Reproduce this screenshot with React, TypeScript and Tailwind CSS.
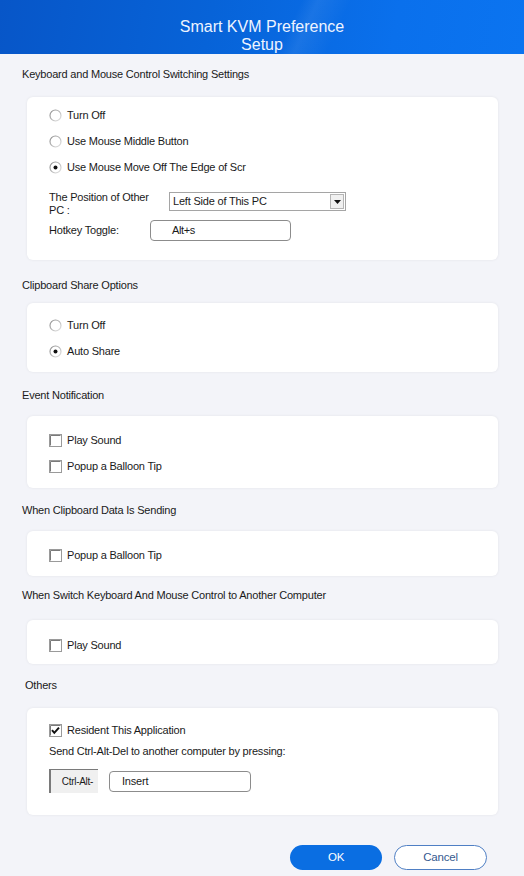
import React from 'react';

const font = { fontFamily: '"Liberation Sans", Arial, sans-serif' };

function Radio({ checked }: { checked?: boolean }) {
  return (
    <svg width="13" height="13" viewBox="0 0 13 13" className="shrink-0">
      <defs>
        <linearGradient id="rg" x1="0" y1="0" x2="1" y2="1">
          <stop offset="0" stopColor="#8a8a8a" />
          <stop offset="1" stopColor="#e6e6e6" />
        </linearGradient>
      </defs>
      <circle cx="6.5" cy="6.5" r="5.5" fill="#fff" stroke="url(#rg)" strokeWidth="1.2" />
      {checked && <circle cx="6.5" cy="6.5" r="2" fill="#111" />}
    </svg>
  );
}

function Check({ checked }: { checked?: boolean }) {
  return (
    <svg width="13" height="13" viewBox="0 0 13 13" className="shrink-0">
      <rect x="0.5" y="0.5" width="12" height="12" fill="#fff" stroke="#9a9a9a" />
      <path d="M1.5 1.5h10M1.5 1.5v10" stroke="#7a7a7a" />
      {checked && <path d="M3 6.2l2.3 2.6L10 3.6" fill="none" stroke="#111" strokeWidth="2" />}
    </svg>
  );
}

function Row({ children }: { children: React.ReactNode }) {
  return <div className="flex h-[26px] items-center gap-[5px]">{children}</div>;
}

function Title({ children, className }: { children: React.ReactNode; className: string }) {
  return <div className={`leading-[16px] ${className}`}>{children}</div>;
}

function Card({ children, className }: { children: React.ReactNode; className: string }) {
  return (
    <div className={`ml-[27px] mr-[26px] rounded-[6px] bg-white px-[22px] shadow-[0_0_3px_rgba(0,0,0,0.07)] ${className}`}>
      {children}
    </div>
  );
}

export default function App() {
  return (
    <div
      className="h-[876px] w-[524px] overflow-hidden bg-[#f3f4f9] text-[11px] tracking-[-0.2px] text-[#1a1a1a]"
      style={font}
    >
      {/* Header */}
      <div className="relative h-[54px] overflow-hidden bg-[linear-gradient(100deg,#0756c8_0%,#0763d8_40%,#0a70ec_75%,#0b74f0_100%)]">
        <div className="absolute inset-0 bg-[linear-gradient(115deg,transparent_0%,transparent_55%,rgba(255,255,255,0.07)_58%,transparent_64%,transparent_100%)]" />
        <div className="relative pt-[18px] text-center text-[16px] leading-[18px] tracking-normal text-[#eef4ff]">
          Smart KVM Preference
          <br />
          Setup
        </div>
      </div>

      <Title className="mb-[15px] pl-[22px] pt-[12px]">Keyboard and Mouse Control Switching Settings</Title>
      <Card className="h-[163px] pt-[5px]">
        <Row>
          <Radio />
          <span>Turn Off</span>
        </Row>
        <Row>
          <Radio />
          <span>Use Mouse Middle Button</span>
        </Row>
        <Row>
          <Radio checked />
          <span>Use Mouse Move Off The Edge of Scr</span>
        </Row>
        <div className="mt-[10px] flex h-[26px]">
          <div className="w-[120px] pt-[1px] leading-[13px]">
            The Position of Other
            <br />
            PC :
          </div>
          <div className="mt-[2px] flex h-[19px] w-[177px] items-center border border-[#a5a5a5] bg-white">
            <span className="flex-1 pl-[3px]">Left Side of This PC</span>
            <div className="mr-[1px] flex h-[15px] w-[14px] items-center justify-center border border-[#b5b5b5] bg-[#f0f0f0]">
              <svg width="7" height="4" viewBox="0 0 7 4">
                <path d="M0 0h7L3.5 4z" fill="#111" />
              </svg>
            </div>
          </div>
        </div>
        <div className="mt-[4px] flex h-[21px] items-center">
          <span className="w-[101px]">Hotkey Toggle:</span>
          <div className="flex h-[21px] w-[141px] items-center rounded-[4px] border border-[#8c8c8c] pl-[21px] tracking-[-0.4px]">
            Alt+s
          </div>
        </div>
      </Card>

      <Title className="mb-[10px] pl-[22px] pt-[17px]">Clipboard Share Options</Title>
      <Card className="h-[69px] pt-[9px]">
        <Row>
          <Radio />
          <span>Turn Off</span>
        </Row>
        <Row>
          <Radio checked />
          <span>Auto Share</span>
        </Row>
      </Card>

      <Title className="mb-[13px] pl-[22px] pt-[15px]">Event Notification</Title>
      <Card className="h-[72px] pt-[11px]">
        <Row>
          <Check />
          <span>Play Sound</span>
        </Row>
        <Row>
          <Check />
          <span>Popup a Balloon Tip</span>
        </Row>
      </Card>

      <Title className="mb-[13px] pl-[22px] pt-[14px]">When Clipboard Data Is Sending</Title>
      <Card className="h-[45px] pt-[11px]">
        <Row>
          <Check />
          <span>Popup a Balloon Tip</span>
        </Row>
      </Card>

      <Title className="mb-[17px] pl-[22px] pt-[11px]">When Switch Keyboard And Mouse Control to Another Computer</Title>
      <Card className="h-[44px] pt-[12px]">
        <Row>
          <Check />
          <span>Play Sound</span>
        </Row>
      </Card>

      <Title className="mb-[15px] pl-[25px] pt-[13px]">Others</Title>
      <Card className="h-[107px] pt-[9px]">
        <Row>
          <Check checked />
          <span>Resident This Application</span>
        </Row>
        <div className="h-[16px] leading-[16px]">Send Ctrl-Alt-Del to another computer by pressing:</div>
        <div className="mt-[10px] flex items-center gap-[11px]">
          <div className="flex h-[24px] w-[49px] items-center justify-end border-l-2 border-t border-[#7a7a7a] bg-[#f0f0f0] pr-[5px] text-[10px] tracking-[-0.3px]">
            Ctrl-Alt-
          </div>
          <div className="flex h-[21px] w-[142px] items-center rounded-[4px] border border-[#8c8c8c] pl-[12px]">Insert</div>
        </div>
      </Card>

      <div className="mt-[30px] flex justify-end gap-[12px] pr-[37px]">
        <button className="h-[25px] w-[92px] rounded-full bg-[#0a6ee2] text-[11.5px] text-white">OK</button>
        <button className="h-[25px] w-[93px] rounded-full border border-[#4f7fc4] bg-white text-[11.5px] text-[#35598f]">
          Cancel
        </button>
      </div>
    </div>
  );
}
